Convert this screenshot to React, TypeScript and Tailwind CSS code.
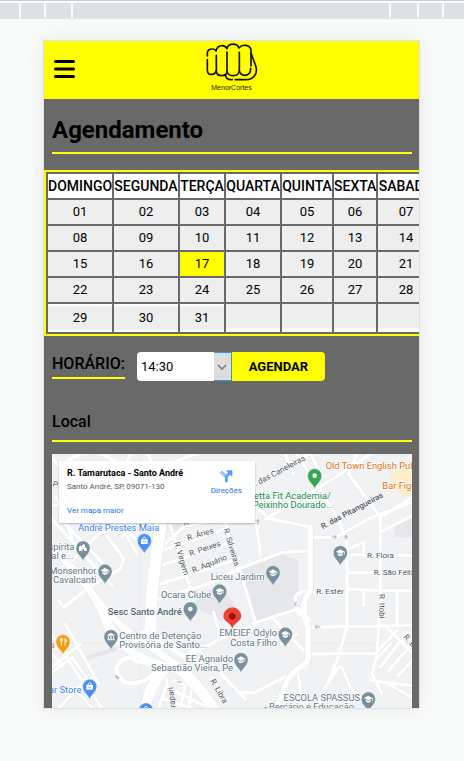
import React from "react";

const headings = ["DOMINGO", "SEGUNDA", "TERÇA", "QUARTA", "QUINTA", "SEXTA", "SABADO"];

const weeks = [
  ["01", "02", "03", "04", "05", "06", "07"],
  ["08", "09", "10", "11", "12", "13", "14"],
  ["15", "16", "17", "18", "19", "20", "21"],
  ["22", "23", "24", "25", "26", "27", "28"],
  ["29", "30", "31", "", "", "", ""],
];

function TopStrip() {
  return (
    <div className="h-[19px] border-t border-[#cbccd6] bg-[#fafbfc] pt-[2px]">
      <div className="h-4 border-b border-[#dee0e5] flex gap-[2px]">
        <div className="w-[19px] bg-[#dee0e5]" />
        <div className="w-[23px] bg-[#dee0e5]" />
        <div className="w-[25px] bg-[#dee0e5]" />
        <div className="flex-1 bg-[#dee0e5]" />
        <div className="w-[26px] bg-[#dee0e5]" />
        <div className="w-[23px] bg-[#dee0e5]" />
        <div className="w-5 bg-[#dee0e5]" />
      </div>
    </div>
  );
}

function FistLogo() {
  return (
    <div className="flex flex-col items-center">
      <svg width="52" height="40" viewBox="0 0 156 120" fill="none" stroke="#111100" strokeWidth="5" strokeLinecap="round" strokeLinejoin="round" aria-hidden="true">
        <path d="M4 39 V31 C4 21 9 18 19 18 Q27 18 30 23" />
        <path d="M4 50 V82 C4 94 12 95 20 94 Q28 93 30 84" />
        <path d="M31 37 V84 C31 95 38 98 47 98 C57 98 63 93 63 84 V27" />
        <path d="M30 24 C34 4 57 4 63 17 C66 -1 94 -1 99 15 C109 2 133 5 135 22 V69" />
        <path d="M63 84 C64 94 72 98 82 98 C92 98 99 92 100 84 V28" />
        <path d="M100 84 C103 94 109 97 116 97 C128 97 134 90 134 76" />
        <path d="M135 30 L149 68 C153 81 151 92 145 99 C138 108 131 110 121 110 H88" />
        <path d="M59 98 C60 108 68 111 79 110" />
      </svg>
      <span className="pt-px text-[7px] leading-[8px] text-[#222200] font-['Liberation_Sans',Arial,sans-serif]">MenorCortes</span>
    </div>
  );
}

function Header() {
  return (
    <header className="grid grid-cols-3 items-center h-[58px] bg-[#ffff00]">
      <button type="button" aria-label="Menu" className="ml-[10px] w-[21px] pb-[2px]">
        <svg className="block" width="21" height="18" viewBox="0 0 21 18" stroke="#000" strokeWidth="3" strokeLinecap="round" aria-hidden="true">
          <path d="M1.5 1.5H19.5M1.5 9H19.5M1.5 16.5H19.5" />
        </svg>
      </button>
      <div className="flex justify-center pb-[5px]">
        <FistLogo />
      </div>
    </header>
  );
}

function Calendar() {
  return (
    <table className="mt-4 w-[394px] table-fixed border-separate border-spacing-[2px] border-2 border-[#ffff00] text-center text-black">
      <colgroup>
        <col className="w-16" />
        <col className="w-16" />
        <col className="w-11" />
        <col className="w-[54px]" />
        <col className="w-[50px]" />
        <col className="w-[42px]" />
        <col className="w-14" />
      </colgroup>
      <thead>
        <tr>
          {headings.map((name) => (
            <th key={name} className="h-6 p-0 bg-white text-sm leading-6 font-medium whitespace-nowrap">
              {name}
            </th>
          ))}
        </tr>
      </thead>
      <tbody>
        {weeks.map((week, row) => {
          const last = row === weeks.length - 1;
          return (
            <tr key={row}>
              {week.map((day, col) => (
                <td key={col} className={last ? (day ? "h-7 p-0 bg-white align-middle" : "h-7 p-0 bg-white align-top") : "h-6 p-0 bg-white align-middle"}>
                  <button
                    type="button"
                    aria-label={day ? undefined : "Sem data"}
                    className={day === "17" ? "block w-full h-6 text-[13px] leading-6 bg-[#ffff00]" : "block w-full h-6 text-[13px] leading-6 bg-[#eeeeee]"}
                  >
                    {day}
                  </button>
                </td>
              ))}
            </tr>
          );
        })}
      </tbody>
    </table>
  );
}

type PinKind = "school" | "dot" | "bag" | "food" | "museum" | "church";

function Pin({ x, y, color, kind }: { x: number; y: number; color: string; kind: PinKind }) {
  return (
    <g transform={`translate(${x} ${y})`}>
      <path d="M0 39 C-2 27 -21 18 -21 0 A21 21 0 0 1 21 0 C21 18 2 27 0 39Z" fill={color} stroke="#f1f3f4" strokeWidth="1" />
      {kind === "school" && (
        <g fill="#fff">
          <path d="M-13 -3 L0 -10 L13 -3 L0 4Z" />
          <path d="M-8 2 L0 6 L8 2 V7 L0 11 L-8 7Z" />
          <path d="M11 -3 H13 V6 H11Z" />
        </g>
      )}
      {kind === "dot" && <circle r="7" fill="#fff" />}
      {kind === "bag" && (
        <g>
          <path d="M-10 -4 H10 V10 H-10Z" fill="#fff" />
          <path d="M-5 -4 C-5 -13 5 -13 5 -4" fill="none" stroke="#fff" strokeWidth="3" />
          <path d="M-4 1 C-3 6 3 6 4 1" fill="none" stroke={color} strokeWidth="2" />
        </g>
      )}
      {kind === "food" && (
        <g fill="none" stroke="#fff" strokeWidth="3">
          <path d="M-8 -11 V-5 Q-8 -2 -5 -2 Q-2 -2 -2 -5 V-11 M-5 -11 V12" />
          <path d="M6 12 V-10 Q10 -7 10 0 H6" />
        </g>
      )}
      {kind === "museum" && (
        <path d="M-11 -5 L0 -12 L11 -5 V-3 H-11Z M-9 -1 H-6 V7 H-9Z M-2 -1 H2 V7 H-2Z M6 -1 H9 V7 H6Z M-11 8 H11 V11 H-11Z" fill="#fff" />
      )}
      {kind === "church" && (
        <path d="M-12 9 V-3 L-7 -8 L-3 -4 V-8 L2 -12 L6 -8 V-3 L11 0 V9 H3 V3 H-2 V9Z" fill="#fff" />
      )}
    </g>
  );
}

const minorRoads =
  "M0 12 L20 35 M85 0 L45 20 M150 0 L190 22 M235 0 L225 22 M285 0 L300 22 M370 22 L430 0 M0 155 H22 M0 195 L180 395 M12 130 L60 250 " +
  "M60 320 L140 240 L205 215 L270 270 M165 245 L215 315 L205 345 L110 400 L35 460 M205 215 L255 300 M150 325 L40 210 M35 460 L20 440 M110 400 L80 370 M240 210 L210 250 " +
  "M355 215 L415 405 M495 375 L560 345 M520 205 L612 510 M310 295 L400 215 L520 195 M310 295 L520 225 M310 340 L545 262 M310 395 L560 315 M310 440 L350 425 L500 380 L560 345 L690 295 L775 290 " +
  "M610 90 L770 0 M610 180 L625 300 M700 0 L725 60 M640 195 L735 140 L850 70 L985 -20 M600 150 L655 195 L710 205 L780 220 M735 0 L850 180 L885 260 V520 L855 620 L830 680 M775 0 L810 65 " +
  "M890 60 L985 190 L985 290 V430 L975 600 L960 660 L990 720 M915 0 L890 60 M985 190 L1080 130 M775 250 L850 250 L960 190 L1080 145 M985 235 L1080 185 M885 305 L935 300 V265 L895 283 M940 305 H1080 M885 355 H965 M885 405 L985 410 H1080 M935 410 V455 M1035 410 V515 " +
  "M775 520 L880 518 L1080 515 M1000 515 L1080 595 M775 600 L970 598 M765 600 L665 495 M690 570 L735 540 M735 445 C715 420 755 405 775 420 M600 510 L735 465 M610 510 L495 560 L400 610 L430 580 M440 590 L580 735 M560 715 H610 L765 635 M485 475 L505 545 L550 490 " +
  "M735 640 L745 710 L760 762 M870 640 L895 700 L960 762 M860 640 L820 700 L795 762 M970 598 L1035 530 M955 680 L1080 695 M1010 690 L1080 730 M1065 535 L985 640 M1080 570 L1010 650 M1080 620 L1040 665 M1015 570 L975 615 " +
  "M0 545 L80 665 L150 762 M40 510 L140 690 M0 640 L85 570 M0 655 L60 610 L105 675 L20 762 M75 710 L120 762 M120 670 L60 720 M0 600 L30 635 " +
  "M345 690 L320 762 M365 680 L440 700 L480 762 M400 690 L385 762 M335 735 L420 762 M345 700 L470 762 M420 700 L410 762 M330 655 L345 680";

function MapLabels() {
  return (
    <g fontFamily="Roboto, 'Liberation Sans', sans-serif" fontSize="28" stroke="#fff" strokeWidth="4" paintOrder="stroke" strokeLinejoin="round">
      <g fill="#4a5257" fontSize="24">
        <text transform="translate(612 97) rotate(-28)">. das Caneleiras</text>
        <text transform="translate(812 226) rotate(-28)" fontWeight="500">R. das Pitangueiras</text>
        <text transform="translate(408 260) rotate(-17)">R. Áries</text>
        <text transform="translate(415 307) rotate(-19)">R. Peixes</text>
        <text transform="translate(424 357) rotate(-22)">R. Aquário</text>
        <text transform="translate(366 266) rotate(73)">R. Virgem</text>
        <text transform="translate(514 226) rotate(73)">R. Silveiras</text>
        <text transform="translate(396 215) rotate(-14)">R.</text>
        <text x="945" y="311">R. Flora</text>
        <text x="965" y="364">R. São Félix</text>
        <text x="793" y="419">R. Estér</text>
        <text transform="translate(981 420) rotate(89)">R. Itobi</text>
        <text transform="translate(474 681) rotate(60)">R. Libra</text>
        <text transform="translate(371 766) rotate(-97)">Irapari</text>
        <text transform="translate(1053 550) rotate(48)">R. Bo</text>
        <text transform="translate(0 96) rotate(20)">P</text>
      </g>
      <g fill="#607781">
        <text x="67" y="288" textAnchor="end">spírita</text>
        <text x="64" y="315" textAnchor="end">ial e...</text>
        <text x="133" y="359" textAnchor="end">Monsenhor</text>
        <text x="133" y="386" textAnchor="end">Cavalcanti</text>
        <text x="637" y="377" textAnchor="end">Liceu Jardim</text>
        <text x="478" y="432" textAnchor="end">Ocara Clube</text>
        <text x="389" y="484" textAnchor="end" fontWeight="500" fill="#4b646f">Sesc Santo André</text>
        <text x="202" y="554">Centro de Detenção</text>
        <text x="202" y="582">Provisória de Santo...</text>
        <text x="675" y="547" textAnchor="end">EMEIEF Odylo</text>
        <text x="675" y="575" textAnchor="end">Costa Filho</text>
        <text x="543" y="623" textAnchor="end">EE Agnaldo</text>
        <text x="543" y="650" textAnchor="end">Sebastião Vieira, Pe</text>
        <text x="924" y="742" textAnchor="end">ESCOLA SPASSUS</text>
        <text x="906" y="769" textAnchor="end">- Berçário e Educação</text>
      </g>
      <g fill="#d9730b">
        <text x="821" y="44">Old Town English Pub</text>
        <text x="991" y="104">Bar Figueira</text>
        <text x="-7" y="582">a</text>
      </g>
      <g fill="#188b45">
        <text x="606" y="134">etta Fit Academia/</text>
        <text x="602" y="161">Peixinho Dourado...</text>
      </g>
      <g fill="#3381ee">
        <text x="78" y="232">André Prestes Maia</text>
        <text x="88" y="716" textAnchor="end">ar Store</text>
      </g>
    </g>
  );
}

function StreetMap() {
  return (
    <svg className="block w-full h-full" viewBox="0 0 1080 762" preserveAspectRatio="xMinYMin slice" role="img" aria-label="Mapa de R. Tamarutaca, Santo André">
      <rect width="1080" height="762" fill="#f1f2f4" />
      <g fill="#e6e7eb">
        <path d="M550 350 L690 300 L740 320 V455 L615 505Z" />
        <path d="M420 455 L500 385 L560 470 L510 500Z" />
        <path d="M1025 250 L1030 210 L1080 185 V250Z" />
        <path d="M340 210 H395 L380 225 H340Z" />
      </g>
      <path d="M1015 60 L1060 40 L1080 60 V115 L1055 130 L1015 90Z" fill="#fcefc7" />
      <path d="M265 0 V762 M0 568 H1080" stroke="#e9eaed" strokeWidth="2" />
      <g fill="none" strokeLinejoin="round" strokeLinecap="round">
        <path d={minorRoads} stroke="#e3e5e9" strokeWidth="12" />
        <path d={minorRoads} stroke="#ffffff" strokeWidth="10" />
        <path d="M190 585 L110 610" stroke="#e3e5e9" strokeWidth="12" />
        <g stroke="#e3e5e9">
          <path d="M328 195 C315 310 297 380 295 530" strokeWidth="39" />
          <path d="M335 650 Q290 700 280 762" strokeWidth="35" />
          <path d="M-10 265 L90 380 Q140 440 165 520 C210 600 300 620 380 650 Q430 700 480 762" strokeWidth="23" />
          <path d="M60 340 L170 480 Q240 545 310 590 L400 650 Q455 705 500 775" strokeWidth="23" />
          <path d="M250 615 C190 600 175 660 220 685 Q270 700 330 640" strokeWidth="17" />
          <path d="M775 220 V410 Q740 450 768 520 V620 Q735 645 715 665 Q690 710 675 762" strokeWidth="20" />
        </g>
        <g stroke="#fff">
          <path d="M328 195 C315 310 297 380 295 530" strokeWidth="36" />
          <path d="M335 650 Q290 700 280 762" strokeWidth="32" />
          <path d="M-10 265 L90 380 Q140 440 165 520 C210 600 300 620 380 650 Q430 700 480 762" strokeWidth="20" />
          <path d="M60 340 L170 480 Q240 545 310 590 L400 650 Q455 705 500 775" strokeWidth="20" />
          <path d="M150 470 Q205 560 250 620 L355 645" strokeWidth="12" />
          <path d="M245 570 Q260 525 300 535 Q340 560 320 590" strokeWidth="12" />
          <path d="M250 615 C190 600 175 660 220 685 Q270 700 330 640" strokeWidth="14" />
          <path d="M295 550 Q350 575 400 610" strokeWidth="12" />
          <path d="M775 220 V410 Q740 450 768 520 V620 Q735 645 715 665 Q690 710 675 762" strokeWidth="17" />
          <path d="M735 465 L770 500" strokeWidth="16" />
        </g>
        <path d="M190 668 L202 672 M194 665 L198 675 M376 683 L388 685 M790 519 H804 M795 514 L790 519 L795 524 M733 444 L729 454 M840 249 H852 M848 244 L853 249 L848 254 M882 256 V244 M877 250 L882 244 L887 250 M617 210 V197 M612 202 L617 197 L622 202" stroke="#a3a9bb" strokeWidth="3" />
      </g>
      <MapLabels />
      <Pin x={788} y={65} color="#34a853" kind="dot" />
      <Pin x={277} y={260} color="#4d90f5" kind="bag" />
      <Pin x={93} y={282} color="#78909c" kind="church" />
      <Pin x={159} y={352} color="#78909c" kind="school" />
      <Pin x={865} y={296} color="#78909c" kind="school" />
      <Pin x={663} y={356} color="#78909c" kind="school" />
      <Pin x={503} y={412} color="#78909c" kind="school" />
      <Pin x={415} y={465} color="#78909c" kind="dot" />
      <Pin x={177} y={548} color="#78909c" kind="museum" />
      <Pin x={700} y={541} color="#78909c" kind="school" />
      <Pin x={567} y={617} color="#78909c" kind="school" />
      <Pin x={949} y={735} color="#78909c" kind="school" />
      <Pin x={33} y={563} color="#f99b08" kind="food" />
      <Pin x={113} y={697} color="#4d90f5" kind="bag" />
      <Pin x={282} y={768} color="#4d90f5" kind="bag" />
      <path d="M541 524 C538 508 514 502 514 487 A27 27 0 0 1 568 487 C568 502 544 508 541 524Z" fill="#ea4335" />
      <circle cx="541" cy="487" r="10" fill="#a50e0e" />
    </svg>
  );
}

function PlaceCard() {
  return (
    <div className="absolute left-[7px] top-[7px] w-[196px] h-[62px] bg-white shadow-[0_1px_2px_rgba(0,0,0,0.25)] flex justify-between pl-2 pr-[13px] py-[7px] whitespace-nowrap">
      <div className="flex flex-col">
        <strong className="text-[9px] leading-[10px] font-bold text-black">R. Tamarutaca - Santo André</strong>
        <span className="mt-1 text-[8px] leading-[10px] text-[#5b5b5b]">Santo André, SP, 09071-130</span>
        <a href="#mapa" className="mt-[14px] text-[8px] leading-[10px] text-[#1a73e8]">Ver mapa maior</a>
      </div>
      <a href="#direcoes" className="flex flex-col items-center text-[8px] leading-[10px] text-[#1a73e8]">
        <svg className="mt-px" width="14" height="14" viewBox="0 0 42 42" aria-hidden="true">
          <path d="M18 40 V26 L3 11 L9 5 L21 17 L27 11 L21 4 H40 V23 L33 17 L26 25 V40Z" fill="#5c9ded" />
          <path d="M3 11 L9 5 L21 17 L16 24Z" fill="#a6c8f4" />
        </svg>
        <span className="mt-[3px]">Direções</span>
      </a>
    </div>
  );
}

function BookingRow() {
  return (
    <form className="mt-4 mx-2 flex items-start" onSubmit={(e) => e.preventDefault()}>
      <label htmlFor="horario" className="h-[27px] border-b-2 border-[#ffff00] text-base leading-6 font-medium text-black">
        HORÁRIO:
      </label>
      <div className="relative ml-3 w-[95px] h-[29px]">
        <select id="horario" defaultValue="14:30" className="block w-full h-full appearance-none rounded-l bg-white pl-1 text-[13px] text-black">
          <option>14:00</option>
          <option>14:30</option>
          <option>15:00</option>
        </select>
        <span className="pointer-events-none absolute right-0 top-0 flex h-full w-[18px] items-center justify-center border-y border-r border-[#2e9be0] bg-[#dddddd]">
          <svg width="10" height="6" viewBox="0 0 10 6" fill="none" stroke="#777" strokeWidth="1.5" aria-hidden="true">
            <path d="M1 1 L5 5 L9 1" />
          </svg>
        </span>
      </div>
      <button type="submit" className="h-[29px] w-[93px] rounded-r bg-[#ffff00] text-[13px] font-bold text-black">
        AGENDAR
      </button>
    </form>
  );
}

export default function App() {
  return (
    <div className="min-h-screen bg-[#f9fbfa] pb-[52px] font-[Roboto,'Liberation_Sans',sans-serif]">
      <TopStrip />
      <div className="mt-[21px] ml-[43px] mr-11 overflow-hidden border border-[#dee0e6] bg-[#696969] shadow-[0_0_20px_rgba(0,0,0,0.07)]">
        <Header />
        <main>
          <h1 className="ml-2 mr-[7px] pt-[15px] h-[55px] border-b-2 border-[#ffff00] text-2xl leading-8 font-bold text-black">Agendamento</h1>
          <Calendar />
          <BookingRow />
          <h2 className="mt-[29px] ml-2 mr-[7px] h-8 border-b-2 border-[#ffff00] text-base leading-6 font-medium text-black">Local</h2>
          <section className="relative mt-3 ml-2 mr-[7px] h-[254px] overflow-hidden">
            <StreetMap />
            <PlaceCard />
          </section>
        </main>
      </div>
    </div>
  );
}
